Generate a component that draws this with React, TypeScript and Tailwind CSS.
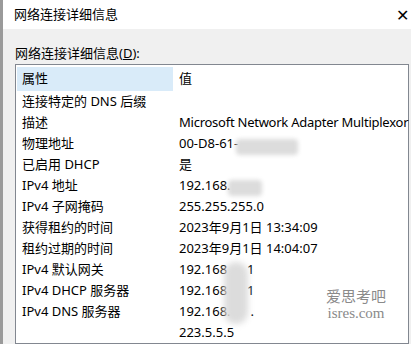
import React from "react";

const rows: [string, React.ReactNode][] = [
  ["连接特定的 DNS 后缀", ""],
  ["描述", <span className="tracking-[-0.25px]">Microsoft Network Adapter Multiplexor</span>],
  ["物理地址", "00-D8-61-"],
  ["已启用 DHCP", "是"],
  ["IPv4 地址", "192.168."],
  ["IPv4 子网掩码", "255.255.255.0"],
  ["获得租约的时间", "2023年9月1日 13:34:09"],
  ["租约过期的时间", "2023年9月1日 14:04:07"],
  ["IPv4 默认网关", <>192.168<span className="inline-block w-[20px]" />1</>],
  ["IPv4 DHCP 服务器", <>192.168<span className="inline-block w-[20px]" />1</>],
  ["IPv4 DNS 服务器", <>192.168.<span className="inline-block w-[20px]" />.</>],
  ["", "223.5.5.5"],
];

export default function App() {
  return (
    <div
      className="relative w-[411px] h-[344px] overflow-hidden bg-[#f0f0f0] text-[13px] text-[#000]"
      style={{ fontFamily: '"Segoe UI", "Noto Sans", "Noto Sans CJK SC", sans-serif' }}
    >
      <div className="flex h-[29px] items-center bg-white pl-[11px] pr-[2px] justify-between border-l-[3px] border-[#9a9a9a]">
        <span className="text-[13px]">网络连接详细信息</span>
        <span className="text-[16px] leading-none font-light">✕</span>
      </div>
      <div className="flex flex-col border-l-[3px] border-[#9a9a9a] h-[315px]">
        <div className="pl-[12px] pt-[15px] h-[37px]">
          网络连接详细信息(<span className="underline">D</span>):
        </div>
        <div className="ml-[12px] mr-[2px] flex-1 border border-[#828790] bg-white pl-[1px] pt-[2px]">
          <div className="flex h-[24px] items-center">
            <div className="w-[156px] shrink-0 h-full flex items-center pl-[5px] bg-[#d9ebf9]">属性</div>
            <div className="pl-[6px]">值</div>
          </div>
          {rows.map(([k, v], i) => (
            <div key={i} className="flex h-[21px] items-center whitespace-nowrap">
              <div className="w-[156px] shrink-0 pl-[5px]">{k}</div>
              <div className="pl-[6px]">{v}</div>
            </div>
          ))}
        </div>
      </div>
      <div className="absolute left-[236px] top-[139px] w-[62px] h-[16px] bg-[#dcdcdc] blur-[2px] rounded" />
      <div className="absolute left-[228px] top-[180px] w-[34px] h-[16px] bg-[#dcdcdc] blur-[2px] rounded" />
      <div className="absolute left-[224px] top-[262px] w-[24px] h-[62px] bg-[#dcdcdc] blur-[3px] rounded-full" />
      <div
        className="absolute left-[326px] top-[290px] flex flex-col items-center leading-none text-[#8a8a8a]"
        style={{ fontFamily: '"Liberation Serif", "Noto Sans CJK SC", serif' }}
      >
        <span className="text-[15px]">爱思考吧</span>
        <span className="text-[15px] mt-[1px]">isres.com</span>
      </div>
    </div>
  );
}
